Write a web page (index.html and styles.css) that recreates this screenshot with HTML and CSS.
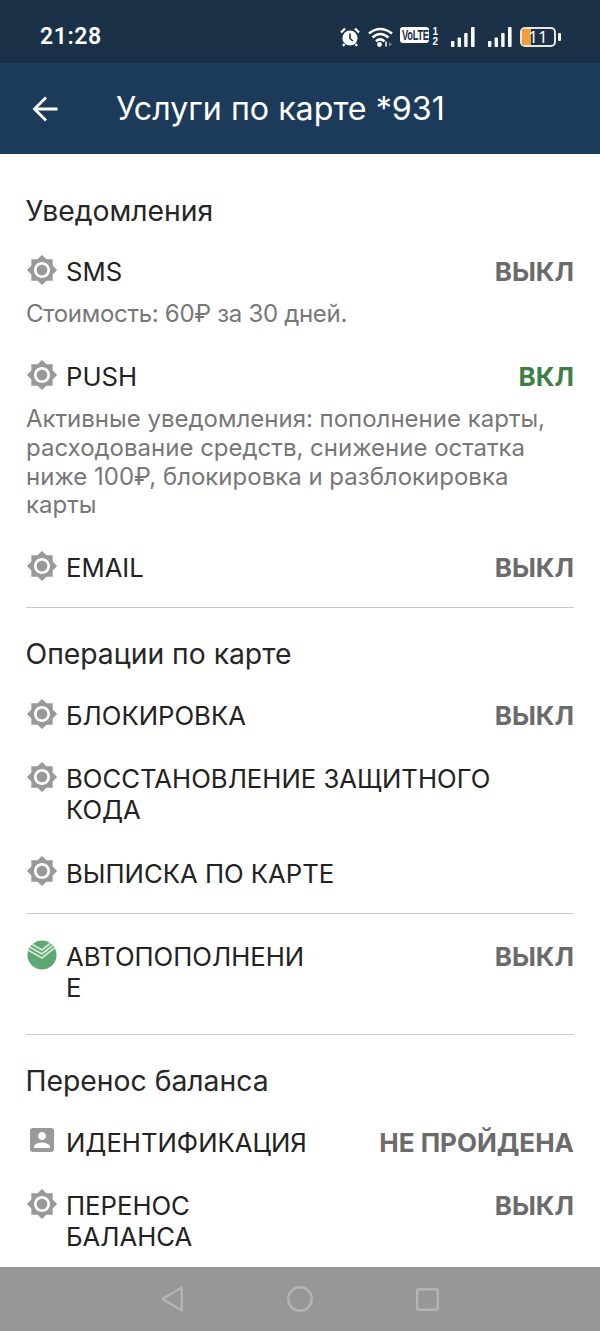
FILE: index.html
```html
<!DOCTYPE html>
<html lang="ru">
<head>
<meta charset="utf-8">
<title>Услуги по карте</title>
<link rel="stylesheet" href="styles.css">
</head>
<body>
<svg class="defs" width="0" height="0">
  <symbol id="sun" viewBox="0 0 24 24"><path d="M20 8.690V4h-4.690L12 .69 8.690 4H4v4.690L.69 12 4 15.310V20h4.690L12 23.310 15.310 20H20v-4.690L23.310 12 20 8.690zM12 18c-3.310 0-6-2.690-6-6s2.690-6 6-6 6 2.690 6 6-2.690 6-6 6zm0-10c-2.210 0-4 1.790-4 4s1.790 4 4 4 4-1.790 4-4-1.790-4-4-4z"/></symbol>
  <symbol id="acc" viewBox="0 0 24 24"><path d="M3 5v14c0 1.100.89 2 2 2h14c1.100 0 2-.9 2-2V5c0-1.100-.9-2-2-2H5c-1.110 0-2 .9-2 2zm12 4c0 1.660-1.340 3-3 3s-3-1.340-3-3 1.340-3 3-3 3 1.340 3 3zm-9 8c0-2 4-3.100 6-3.100s6 1.100 6 3.100v1H6v-1z"/></symbol>
  <symbol id="sig" viewBox="0 0 24 20"><rect x="0" y="14" width="3.400" height="6" rx=".8"/><rect x="6.600" y="10.500" width="3.400" height="9.500" rx=".8"/><rect x="13.200" y="6" width="3.400" height="14" rx=".8"/><rect x="20" y="0" width="3.600" height="20" rx=".8"/></symbol>
</svg>
<div class="screen">
  <header class="status">
    <span class="time">21:28</span>
    <div class="status-icons">
      <svg class="alarm" width="20" height="20" viewBox="0 0 20 20"><circle cx="10" cy="11" r="7.600" fill="#fff"/><path d="M10 6.500V11.500L13 14" fill="none" stroke="#1a3147" stroke-width="1.600"/><path d="M1 5.500 5 1.500M19 5.500 15 1.500M4.500 17 3 19M15.500 17 17 19" stroke="#fff" stroke-width="2.400" fill="none"/></svg>
      <svg class="wifi" width="25" height="20" viewBox="0 0 25 20"><path d="M1 6.500Q12-2.500 24 6.500M4.500 10.500Q12 3.500 20.500 10.500M8 14.200Q12 10.500 16.500 14.200" fill="none" stroke="#fff" stroke-width="2.600"/><circle cx="11.500" cy="17.500" r="2.400" fill="#fff"/><path d="M18 14.500v5" stroke="#fff" stroke-width="1.500"/><path d="M21 15l3 2.200-3 2.200z" fill="#7f8c99"/></svg>
      <span class="volte"><span class="volte-text">VoLTE</span></span>
      <span class="sims"><span>1</span><span>2</span></span>
      <svg class="signal" width="24" height="20"><use href="#sig"/></svg>
      <svg class="signal second" width="24" height="20"><use href="#sig"/></svg>
      <div class="battery"><span class="charge"></span><span class="level">11</span></div>
      <span class="nub"></span>
    </div>
  </header>
  <div class="appbar">
    <svg class="back" width="26" height="26" viewBox="0 0 26 26"><path d="M25.500 13H2.500M14 1.500 2.500 13 14 24.500" fill="none" stroke="#fff" stroke-width="2.800"/></svg>
    <h1 class="title">Услуги по карте *931</h1>
  </div>
  <main class="content">
    <section class="section first">
      <h2 class="heading">Уведомления</h2>
      <div class="row">
        <svg class="icon"><use href="#sun"/></svg>
        <span class="label short">SMS</span>
        <span class="value">ВЫКЛ</span>
      </div>
      <p class="desc one">Стоимость: 60₽ за 30 дней.</p>
      <div class="row">
        <svg class="icon"><use href="#sun"/></svg>
        <span class="label short">PUSH</span>
        <span class="value on">ВКЛ</span>
      </div>
      <p class="desc">Активные уведомления: пополнение карты, расходование средств, снижение остатка ниже 100₽, блокировка и разблокировка карты</p>
      <div class="row">
        <svg class="icon"><use href="#sun"/></svg>
        <span class="label short">EMAIL</span>
        <span class="value">ВЫКЛ</span>
      </div>
    </section>
    <section class="section">
      <h2 class="heading">Операции по карте</h2>
      <div class="row">
        <svg class="icon"><use href="#sun"/></svg>
        <span class="label short">БЛОКИРОВКА</span>
        <span class="value">ВЫКЛ</span>
      </div>
      <div class="row">
        <svg class="icon"><use href="#sun"/></svg>
        <span class="label long">ВОССТАНОВЛЕНИЕ ЗАЩИТНОГО КОДА</span>
      </div>
      <div class="row">
        <svg class="icon"><use href="#sun"/></svg>
        <span class="label long">ВЫПИСКА ПО КАРТЕ</span>
      </div>
    </section>
    <section class="section solo">
      <div class="row">
        <svg class="icon logo" viewBox="0 0 30 30"><defs><clipPath id="disc"><circle cx="15" cy="15" r="14.500"/></clipPath></defs><circle cx="15" cy="15" r="14.500" fill="#5fa873"/><g clip-path="url(#disc)" fill="none" stroke="#d8eadc" stroke-width="1.700"><path d="M-1 5 15 14 31 1"/><path d="M-1 9 15 18 31 5"/><path d="M-1 1 15 10 31-3"/></g></svg>
        <span class="label short">АВТОПОПОЛНЕНИЕ</span>
        <span class="value">ВЫКЛ</span>
      </div>
    </section>
    <section class="section last">
      <h2 class="heading">Перенос баланса</h2>
      <div class="row">
        <svg class="icon"><use href="#acc"/></svg>
        <span class="label short">ИДЕНТИФИКАЦИЯ</span>
        <span class="value">НЕ ПРОЙДЕНА</span>
      </div>
      <div class="row">
        <svg class="icon"><use href="#sun"/></svg>
        <span class="label short">ПЕРЕНОС БАЛАНСА</span>
        <span class="value">ВЫКЛ</span>
      </div>
    </section>
  </main>
  <nav class="navbar">
    <svg width="22" height="26" viewBox="0 0 22 26"><path d="M20.800 1.500V24.500L1.500 13z" fill="none" stroke="#b4b4b4" stroke-width="2.400" stroke-linejoin="round"/></svg>
    <svg width="26" height="26" viewBox="0 0 26 26"><circle cx="13" cy="13" r="11.800" fill="none" stroke="#b4b4b4" stroke-width="2.400"/></svg>
    <svg width="23" height="23" viewBox="0 0 23 23"><rect x="1.200" y="1.200" width="20.600" height="20.600" rx="1.500" fill="none" stroke="#b4b4b4" stroke-width="2.400"/></svg>
  </nav>
</div>
</body>
</html>
```
FILE: styles.css
```css
* { box-sizing: border-box; }
html, body { margin: 0; padding: 0; background: #fff; }
body { font-family: Inter, sans-serif; color: #222; }
.defs { display: block; height: 0; }
.screen { width: 600px; height: 1331px; display: flex; flex-direction: column; overflow: hidden; }

.status { height: 63px; background: #1a3147; display: flex; align-items: center; padding: 10px 39px 0 40px; justify-content: space-between; flex: none; }
.time { color: #fff; font-size: 23px; font-weight: 600; letter-spacing: .6px; font-family: Roboto, sans-serif; }
.status-icons { display: flex; align-items: center; }
.alarm { margin-right: 8px; }
.wifi { margin-right: 7px; }
.volte { background: #fff; color: #1a3147; font: 700 14px/16px "Liberation Sans", sans-serif; width: 29px; height: 16px; display: flex; justify-content: center; border-radius: 3px; margin-top: -4px; }
.volte-text { display: block; transform: scaleX(.66); letter-spacing: -.3px; }
.sims { display: flex; flex-direction: column; color: #fff; font: 700 10px/10px "Liberation Sans", sans-serif; margin: 0 13px 0 3px; }
.signal { fill: #fff; }
.second { margin-left: 13px; margin-right: 8px; }
.battery { width: 36px; height: 20px; border: 2px solid #e9e5dc; border-radius: 5px; position: relative; display: flex; justify-content: center; align-items: center; }
.charge { position: absolute; left: 0; top: 0; bottom: 0; width: 9px; background: #f0a038; border-radius: 3px 0 0 3px; }
.level { position: relative; color: #fff; font: 400 17px/16px "Noto Sans", sans-serif; }
.nub { width: 3px; height: 8px; background: #fff; margin-left: 2px; border-radius: 1px; }

.appbar { height: 91px; background: #1c3a5a; display: flex; align-items: center; padding: 0 0 0 32px; flex: none; }
.back { margin-right: 58px; }
.title { margin: 0; color: #fff; font-size: 32.200px; font-weight: 400; }

.content { flex: 1; padding: 0 26px; overflow: hidden; min-height: 0; }
.section { border-bottom: 1px solid #c9c9c9; padding-top: 30px; }
.section.first { padding-top: 40.500px; }
.section.solo { padding-top: 27px; }
.section.last { border-bottom: 0; }
.heading { margin: 0 0 30px; font-size: 28.300px; line-height: 32px; font-weight: 400; color: #262626; margin-left: -.5px; }
.first .heading { margin-bottom: 29.500px; }

.row { display: flex; justify-content: space-between; align-items: flex-start; margin-bottom: 32.300px; position: relative; padding-left: 41px; }
.section .row:last-child { margin-bottom: 24px; }
.section.solo .row:last-child { margin-bottom: 31px; }
.icon { position: absolute; left: 0; top: -2.500px; width: 32px; height: 32px; fill: #999; }
.logo { left: 1px; width: 30px; height: 30px; top: -1px; }
.label { font-size: 25.700px; line-height: 31px; color: #222; display: block; overflow-wrap: anywhere; margin-left: -1px; }
.label.short { width: 241px; }
.label.long { max-width: 470px; }
.value { font-size: 26px; line-height: 31px; font-weight: 700; color: #6b6b6b; white-space: nowrap; }
.value.on { color: #3d8046; }

.desc { margin: -19px 0 32px; font-size: 24px; line-height: 28.700px; color: #777; }
.desc.one { letter-spacing: -.3px; }

.navbar { height: 64px; background: #979797; display: flex; justify-content: center; align-items: center; gap: 103.500px; flex: none; }
```
